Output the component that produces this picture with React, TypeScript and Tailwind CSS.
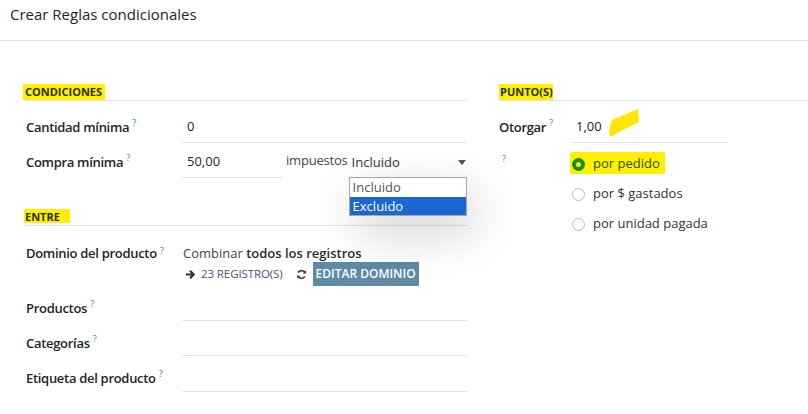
const font = { fontFamily: '"Open Sans", "Noto Sans", sans-serif' };

function Help() {
  return <sup className="ml-[3px] text-[9px] font-normal tracking-normal text-[#1f8ac7]">?</sup>;
}

function SectionTitle({ children, hl }: { children: React.ReactNode; hl: string }) {
  return (
    <div className="mt-[43px] flex h-[17px] items-start border-b border-[#dee2e6]">
      <span className={`inline-block h-[16px] text-[11px] font-bold leading-[16px] text-[#2e2e00] ${hl}`}>
        {children}
      </span>
    </div>
  );
}

function FieldRow({
  label,
  value,
  mt = "mt-[4px]",
  labelPt = "pt-0",
}: {
  label: string;
  value?: string;
  mt?: string;
  labelPt?: string;
}) {
  return (
    <div className={`flex ${mt} h-[31px] items-stretch`}>
      <div
        className={`flex w-[158px] shrink-0 items-center pl-[1px] text-[13px] font-semibold tracking-[-0.3px] text-[#212529] ${labelPt}`}
      >
        {label}
        <Help />
      </div>
      <div className="flex flex-1 items-center border-b border-[#dee2e6] px-[4px] text-[13px] text-[#212529]">
        {value}
      </div>
    </div>
  );
}

function Radio({ label, checked }: { label: string; checked?: boolean }) {
  return (
    <div className="flex h-[30px] items-center gap-[8px] text-[13px] text-[#333]">
      <span
        className={
          checked
            ? "h-[13px] w-[13px] rounded-full border-[4px] border-[#119012] bg-[#ffee00]"
            : "h-[13px] w-[13px] rounded-full border border-[#b9b9b9] bg-white"
        }
      />
      <span className={checked ? "text-[#2f4f00]" : ""}>{label}</span>
    </div>
  );
}

export default function App() {
  return (
    <div className="relative h-[414px] w-[808px] overflow-hidden bg-white" style={font}>
      {/* Header */}
      <div className="h-[41px] border-b border-[#dedede] pl-[10px] pt-[3px] text-[15px] text-[#262626]">
        Crear Reglas condicionales
      </div>

      <div className="flex">
        {/* Left column */}
        <div className="ml-[25px] w-[442px] shrink-0">
          <SectionTitle hl="-ml-[2px] pl-[2px] pr-[3px] bg-[#fff000]">CONDICIONES</SectionTitle>
          <FieldRow label="Cantidad mínima" value="0" mt="mt-[11px]" />

          {/* Compra mínima */}
          <div className="mt-[4px] flex h-[31px] items-stretch">
            <div className="flex w-[158px] shrink-0 items-center pl-[1px] text-[13px] font-semibold tracking-[-0.3px] text-[#212529]">
              Compra mínima
              <Help />
            </div>
            <div className="flex w-[100px] shrink-0 items-center border-b border-[#dee2e6] px-[4px] text-[13px] text-[#212529]">
              50,00
            </div>
            <div className="flex shrink-0 items-center pb-[3px] pl-[3px] text-[13px] tracking-[-0.2px] text-[#4a4a4a]">
              impuestos
            </div>
            <div className="relative ml-[2px] flex min-w-0 flex-1 items-center justify-between border-b border-[#6f7f95] pl-[2px] text-[13px] text-[#333]">
              <span className="pt-[2px]">Incluido</span>
              <svg width="8" height="5" viewBox="0 0 8 5" className="mr-[1px]">
                <path d="M0 0h8L4 5z" fill="#555" />
              </svg>
              {/* Open dropdown */}
              <div className="absolute left-[-1px] right-0 top-[30px] z-10 border border-[#a7a7a7] bg-white shadow-[8px_16px_50px_rgba(0,0,0,0.2)]">
                <div className="h-[19px] pl-[3px] text-[13px] leading-[19px] text-[#555]">Incluido</div>
                <div className="h-[18px] bg-[#1b66d0] pl-[3px] text-[13px] leading-[18px] text-white">Excluido</div>
              </div>
            </div>
          </div>

          <div className="mt-[31px] flex h-[17px] items-start border-b border-[#dee2e6]">
            <span className="-ml-[1px] inline-block h-[14px] bg-[#fff000] pl-[1px] pr-[10px] text-[11px] font-bold leading-[15px] text-[#2e2e00]">
              ENTRE
            </span>
          </div>

          {/* Dominio del producto */}
          <div className="mt-[18px] flex">
            <div className="w-[158px] shrink-0 pl-[1px] text-[13px] font-semibold leading-[18px] tracking-[-0.3px] text-[#212529]">
              Dominio del producto
              <Help />
            </div>
            <div className="flex flex-col">
              <div className="text-[13px] leading-[18px] text-[#444]">
                Combinar <span className="font-semibold text-[#2b2b2b]">todos los registros</span>
              </div>
              <div className="flex h-[24px] items-center">
                <svg width="11" height="11" viewBox="0 0 12 12" className="ml-[2px]">
                  <path d="M1 6h8M5.5 2l4 4-4 4" stroke="#333" strokeWidth="2.4" fill="none" />
                </svg>
                <span className="ml-[5px] text-[11.5px] tracking-[-0.1px] text-[#4d4f78]">23 REGISTRO(S)</span>
                <svg width="11" height="11" viewBox="0 0 12 12" className="ml-[13px]">
                  <path d="M10 4.5A4.3 4.3 0 0 0 2.3 4" stroke="#444" strokeWidth="2" fill="none" />
                  <path d="M7.5 4.8H11V1.3z" fill="#444" />
                  <path d="M2 7.5A4.3 4.3 0 0 0 9.7 8" stroke="#444" strokeWidth="2" fill="none" />
                  <path d="M4.5 7.2H1v3.5z" fill="#444" />
                </svg>
                <div className="ml-[6px] flex h-[24px] w-[106px] items-center justify-center bg-[#5e8aa5] text-[12px] font-semibold text-white">
                  EDITAR DOMINIO
                </div>
              </div>
            </div>
          </div>

          <FieldRow label="Productos" labelPt="pt-[6px]" />
          <FieldRow label="Categorías" labelPt="pt-[6px]" />
          <FieldRow label="Etiqueta del producto" mt="mt-[5px]" labelPt="pt-[4px]" />
        </div>

        {/* Right column */}
        <div className="ml-[32px] flex-1">
          <SectionTitle hl="bg-[#fff000] pl-[1px]">PUNTO(S)</SectionTitle>
          <div className="relative mt-[11px] flex h-[31px] items-stretch">
            <div className="flex w-[73px] shrink-0 items-center text-[13px] font-semibold tracking-[-0.3px] text-[#212529]">
              Otorgar
              <Help />
            </div>
            <div className="flex w-[155px] items-center border-b border-[#dee2e6] px-[4px] text-[13px] text-[#212529]">
              1,00
            </div>
            <svg width="32" height="28" viewBox="0 0 32 28" className="absolute left-[109px] top-[-3px]">
              <path d="M4 11 Q16 6 30 0 L31 13 Q16 20 2 28 Q0 20 4 11z" fill="#ffe600" />
            </svg>
          </div>

          <div className="mt-[6px] flex">
            <div className="w-[73px] shrink-0 pl-[3px] pt-[4px] text-[9px] leading-[12px] text-[#1f8ac7]">?</div>
            <div className="relative flex flex-col">
              <div className="absolute left-[-2px] top-[3px] h-[22px] w-[95px] rounded-[2px] bg-[#fff000]" />
              <div className="relative">
                <Radio label="por pedido" checked />
              </div>
              <Radio label="por $ gastados" />
              <Radio label="por unidad pagada" />
            </div>
          </div>
        </div>
      </div>
    </div>
  );
}
